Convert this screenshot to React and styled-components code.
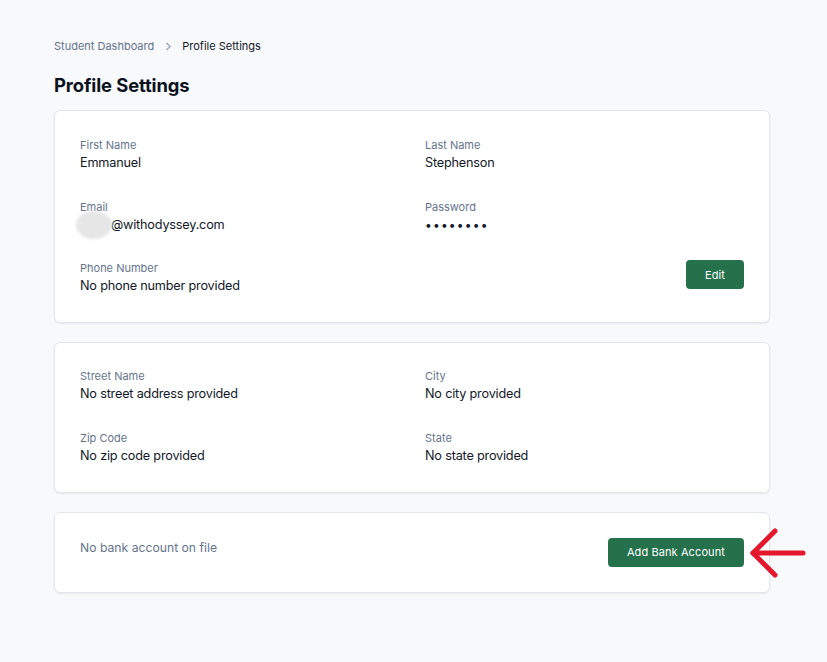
import React from "react";
import styled, { createGlobalStyle } from "styled-components";

const Global = createGlobalStyle`
  html, body { margin: 0; padding: 0; background: #f8f9fb; }
  body { font-family: Inter, "Noto Sans", "Liberation Sans", sans-serif; color: #0f172a; -webkit-font-smoothing: antialiased; }
`;

const Page = styled.div`
  min-height: 662px;
  padding: 38px 57px 40px 54px;
  box-sizing: border-box;
`;

const Crumbs = styled.nav`
  display: flex;
  align-items: center;
  gap: 9px;
  font-size: 11px;
  line-height: 16px;
  height: 16px;
`;

const Crumb = styled.span`
  color: ${(p) => (p.$current ? "#111827" : "#64748b")};
`;

const Sep = styled.span`
  display: inline-flex;
  padding: 0 1px 0 2px;
`;

const Title = styled.h1`
  margin: 20px 0 14px;
  font-size: 18.4px;
  line-height: 22px;
  font-weight: 700;
  color: #0b1220;
  letter-spacing: -0.1px;
`;

const Stack = styled.div`
  display: flex;
  flex-direction: column;
  gap: 19px;
`;

const Card = styled.section`
  position: relative;
  background: #ffffff;
  border: 1px solid #e2e6ec;
  border-radius: 6px;
  box-shadow: 0 1px 2px rgba(15, 23, 42, 0.07);
  padding: ${(p) => p.$pad || "26px 25px 26px"};
`;

const Grid = styled.div`
  display: grid;
  grid-template-columns: 1fr 1fr;
  column-gap: 26px;
  row-gap: 25.5px;
`;

const Field = styled.div`
  display: flex;
  flex-direction: column;
`;

const Label = styled.div`
  font-size: 11px;
  line-height: 16px;
  color: #64748b;
`;

const Value = styled.div`
  font-size: 12.7px;
  letter-spacing: -0.2px;
  line-height: 20px;
  color: #111827;
  display: flex;
  align-items: center;
`;

const Dots = styled(Value)`
  letter-spacing: 1.2px;
  font-size: 12px;
`;

const Redacted = styled.span`
  display: inline-block;
  width: 36px;
  height: 28px;
  margin: -4px -1px -4px -4px;
  border-radius: 50%;
  background: #e6e6e6;
  filter: blur(1.5px);
`;

const ActionCell = styled.div`
  display: flex;
  justify-content: flex-end;
  align-items: flex-start;
`;

const Button = styled.button`
  font-family: inherit;
  background: #24714b;
  color: #ffffff;
  border: none;
  border-radius: 4px;
  height: 29px;
  padding: 0 19px;
  font-size: 11px;
  font-weight: 400;
  letter-spacing: 0.1px;
  cursor: pointer;
`;

const BankRow = styled.div`
  display: flex;
  justify-content: space-between;
  align-items: flex-start;
`;

const Muted = styled.div`
  font-size: 12.2px;
  line-height: 18px;
  padding-top: 1px;
  color: #64748b;
`;

const ButtonWrap = styled.div`
  position: relative;
`;

const Arrow = styled.svg`
  position: absolute;
  left: calc(100% + 5px);
  top: -10px;
  pointer-events: none;
`;

export default function App() {
  return (
    <>
      <Global />
      <Page>
        <Crumbs>
          <Crumb>Student Dashboard</Crumb>
          <Sep>
            <svg width="7" height="9" viewBox="0 0 7 9">
              <path d="M1.5 1 L5 4.5 L1.5 8" fill="none" stroke="#94a3b8" strokeWidth="1.2" />
            </svg>
          </Sep>
          <Crumb $current>Profile Settings</Crumb>
        </Crumbs>
        <Title>Profile Settings</Title>
        <Stack>
          <Card>
            <Grid>
              <Field>
                <Label>First Name</Label>
                <Value>Emmanuel</Value>
              </Field>
              <Field>
                <Label>Last Name</Label>
                <Value>Stephenson</Value>
              </Field>
              <Field>
                <Label>Email</Label>
                <Value>
                  <Redacted />
                  @withodyssey.com
                </Value>
              </Field>
              <Field>
                <Label>Password</Label>
                <Dots>••••••••</Dots>
              </Field>
              <Field>
                <Label>Phone Number</Label>
                <Value>No phone number provided</Value>
              </Field>
              <ActionCell>
                <Button>Edit</Button>
              </ActionCell>
            </Grid>
          </Card>
          <Card $pad="25px 25px 26px">
            <Grid>
              <Field>
                <Label>Street Name</Label>
                <Value>No street address provided</Value>
              </Field>
              <Field>
                <Label>City</Label>
                <Value>No city provided</Value>
              </Field>
              <Field>
                <Label>Zip Code</Label>
                <Value>No zip code provided</Value>
              </Field>
              <Field>
                <Label>State</Label>
                <Value>No state provided</Value>
              </Field>
            </Grid>
          </Card>
          <Card $pad="25px 25px 25px">
            <BankRow>
              <Muted>No bank account on file</Muted>
              <ButtonWrap>
                <Button>Add Bank Account</Button>
                <Arrow width="58" height="50" viewBox="0 0 58 50">
                  <g fill="none" stroke="#e3182d" strokeWidth="5" strokeLinecap="round" strokeLinejoin="round">
                    <path d="M4 25 H54" />
                    <path d="M26 3 L4 25 L26 47" />
                  </g>
                </Arrow>
              </ButtonWrap>
            </BankRow>
          </Card>
        </Stack>
      </Page>
    </>
  );
}
